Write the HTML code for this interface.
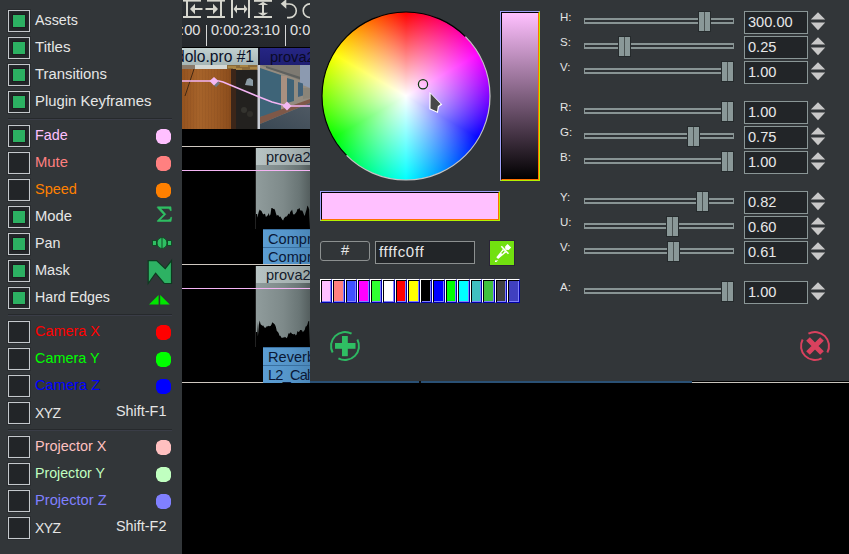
<!DOCTYPE html><html><head><meta charset="utf-8"><style>
*{margin:0;padding:0;box-sizing:border-box}
html,body{width:849px;height:554px;overflow:hidden;background:#000}
body{position:relative;font-family:"Liberation Sans",sans-serif}
.a{position:absolute}
.t{position:absolute;white-space:nowrap;font-size:14.8px;line-height:16px;color:#e6e6e6}
.cb{position:absolute;width:22px;height:22px;border:1px solid #c4c8cc;background:#222528;box-shadow:0 0 0 1px #2a2d30, inset 0 0 0 1px #26292c}
.cb i{position:absolute;left:4px;top:4px;width:12px;height:12px;background:#2cb062;box-shadow:0 0 0 1px #1e1c20}
.sep{position:absolute;left:8px;width:164px;height:2px;border-top:1px solid #26292c;background:#3a3d47}
.oct{position:absolute;width:15px;height:15px;clip-path:polygon(33% 0,67% 0,87% 8%,100% 33%,100% 67%,92% 87%,67% 100%,33% 100%,13% 92%,0 67%,0 33%,8% 13%)}
</style></head><body>

<div class="a" style="left:0;top:0;width:182px;height:554px;background:#323639"></div>
<div class="cb" style="left:8px;top:10px"><i></i></div>
<div class="t" style="left:35px;top:12px;color:#e6e6e6;font-size:14.3px;">Assets</div>
<div class="cb" style="left:8px;top:37px"><i></i></div>
<div class="t" style="left:35px;top:39px;color:#e6e6e6;font-size:15.1px;">Titles</div>
<div class="cb" style="left:8px;top:64px"><i></i></div>
<div class="t" style="left:35px;top:66px;color:#e6e6e6;font-size:14.85px;">Transitions</div>
<div class="cb" style="left:8px;top:91px"><i></i></div>
<div class="t" style="left:35px;top:93px;color:#e6e6e6;font-size:14.85px;">Plugin Keyframes</div>
<div class="cb" style="left:8px;top:125px"><i></i></div>
<div class="t" style="left:35px;top:127px;color:#ffc0ff;font-size:14.35px;">Fade</div>
<div class="oct" style="left:156px;top:129px;background:#ffc0ff"></div>
<div class="cb" style="left:8px;top:152px"></div>
<div class="t" style="left:35px;top:154px;color:#ff8080;font-size:14.8px;">Mute</div>
<div class="oct" style="left:156px;top:156px;background:#ff8080"></div>
<div class="cb" style="left:8px;top:179px"></div>
<div class="t" style="left:35px;top:181px;color:#ff8000;font-size:14.5px;">Speed</div>
<div class="oct" style="left:156px;top:183px;background:#ff8000"></div>
<div class="cb" style="left:8px;top:206px"><i></i></div>
<div class="t" style="left:35px;top:208px;color:#e6e6e6;font-size:14.8px;">Mode</div>
<svg class="a" style="left:150px;top:200px" width="30" height="30" viewBox="0 0 30 30"><path d="M7 0.5 H21.5 L21.8 4.5 H20.8 C20.3 2.8 19.5 2.3 17 2.3 H10.5 L16 8.3 L9.8 14 H17.5 C19.8 14 20.8 13.4 21.3 11.3 H22.3 L21.6 15.6 H6.8 V14.8 L13.6 8.5 L6.8 1.4 Z" fill="#2fbf63" stroke="#2fbf63" stroke-width="0.6" transform="translate(7.3,6.3) scale(0.93,0.97) translate(-6.8,0)"/></svg>
<div class="cb" style="left:8px;top:233px"><i></i></div>
<div class="t" style="left:35px;top:235px;color:#e6e6e6;font-size:14.3px;">Pan</div>
<svg class="a" style="left:150px;top:233px" width="30" height="22" viewBox="0 0 30 22"><rect x="2.5" y="7.5" width="4" height="5" fill="#2fbf63" stroke="#124a26" stroke-width="1"/><rect x="17.5" y="7.5" width="4" height="5" fill="#2fbf63" stroke="#124a26" stroke-width="1"/><ellipse cx="12" cy="10" rx="5" ry="5.5" fill="#2fbf63" stroke="#124a26" stroke-width="1"/><rect x="11.5" y="5" width="1" height="10" fill="#124a26"/></svg>
<div class="cb" style="left:8px;top:260px"><i></i></div>
<div class="t" style="left:35px;top:262px;color:#e6e6e6;font-size:14.55px;">Mask</div>
<svg class="a" style="left:146px;top:258px" width="30" height="30" viewBox="0 0 30 30"><path d="M2.2 2.6 H10.6 L19.2 10.6 L25.5 2.6 V25.5 H18.2 L9.6 15.2 L2.2 25.5 Z" fill="#2db263" stroke="#0e3a20" stroke-width="1.2" stroke-linejoin="miter"/></svg>
<div class="cb" style="left:8px;top:287px"><i></i></div>
<div class="t" style="left:35px;top:289px;color:#e6e6e6;font-size:14.2px;">Hard Edges</div>
<svg class="a" style="left:146px;top:287px" width="30" height="22" viewBox="0 0 30 22"><path d="M3 17.5 L12.6 7.9 V17.5 Z M14.2 7.9 L23.8 17.5 H14.2 Z" fill="#00e600"/></svg>
<div class="cb" style="left:8px;top:321px"></div>
<div class="t" style="left:35px;top:323px;color:#ff0000;font-size:14.45px;">Camera X</div>
<div class="oct" style="left:156px;top:325px;background:#ff0000"></div>
<div class="cb" style="left:8px;top:348px"></div>
<div class="t" style="left:35px;top:350px;color:#00ff00;font-size:14.4px;">Camera Y</div>
<div class="oct" style="left:156px;top:352px;background:#00ff00"></div>
<div class="cb" style="left:8px;top:375px"></div>
<div class="t" style="left:35px;top:377px;color:#0000ff;font-size:14.65px;">Camera Z</div>
<div class="oct" style="left:156px;top:379px;background:#0000ff"></div>
<div class="cb" style="left:8px;top:402px"></div>
<div class="t" style="left:35px;top:405px;color:#e6e6e6;font-size:14.0px;letter-spacing:-0.6px">XYZ</div>
<div class="t" style="left:116px;top:403px;font-size:14.4px">Shift-F1</div>
<div class="cb" style="left:8px;top:436px"></div>
<div class="t" style="left:35px;top:438px;color:#ffc0c0;font-size:14.45px;">Projector X</div>
<div class="oct" style="left:156px;top:440px;background:#ffc0c0"></div>
<div class="cb" style="left:8px;top:463px"></div>
<div class="t" style="left:35px;top:465px;color:#c0ffc0;font-size:14.2px;">Projector Y</div>
<div class="oct" style="left:156px;top:467px;background:#c0ffc0"></div>
<div class="cb" style="left:8px;top:490px"></div>
<div class="t" style="left:35px;top:492px;color:#8080ff;font-size:14.65px;">Projector Z</div>
<div class="oct" style="left:156px;top:494px;background:#8080ff"></div>
<div class="cb" style="left:8px;top:517px"></div>
<div class="t" style="left:35px;top:520px;color:#e6e6e6;font-size:14.0px;letter-spacing:-0.6px">XYZ</div>
<div class="t" style="left:116px;top:518px;font-size:14.4px">Shift-F2</div>
<div class="sep" style="top:118px"></div>
<div class="sep" style="top:314px"></div>
<div class="sep" style="top:429px"></div>
<div class="a" style="left:182px;top:0;width:128px;height:554px;background:#000;overflow:hidden">
<div class="a" style="left:0;top:0;width:128px;height:47px;background:linear-gradient(#2c3034,#25282c)"></div>
<svg class="a" style="left:0;top:0" width="128" height="22" viewBox="182 0 128 22">
<g fill="#d6d6ce">
<rect x="183" y="0" width="18" height="1.6"/><rect x="186" y="0" width="2" height="17"/><rect x="183" y="16" width="18" height="2"/>
<rect x="193.5" y="8" width="9" height="2"/><path d="M190 9 L195 3.8 V14.2 Z"/>
<rect x="207" y="0" width="18" height="1.6"/><rect x="220" y="0" width="2" height="17"/><rect x="207" y="16" width="18" height="2"/>
<rect x="205.5" y="8" width="9" height="2"/><path d="M218 9 L213 3.8 V14.2 Z"/>
<rect x="231" y="0" width="2" height="18"/><rect x="248" y="0" width="2" height="18"/>
<rect x="235" y="8" width="11" height="2"/><path d="M233.5 9 L237 4.5 V13.5 Z M247.5 9 L244 4.5 V13.5 Z"/>
<rect x="254" y="0" width="18" height="1.8"/><rect x="254" y="16" width="18" height="2"/>
<rect x="262" y="3" width="2" height="12"/><path d="M263 1.8 L268.2 5 H257.8 Z M263 16 L268.2 12.8 H257.8 Z"/>
<path d="M280.7 3.8 L286.3 -1 V8.7 Z"/>
</g>
<path d="M285 4 H289.5 A6.8 6.8 0 0 1 289.5 17.6 H287" fill="none" stroke="#d6d6ce" stroke-width="1.6"/>
<circle cx="310" cy="10.7" r="6.8" fill="none" stroke="#d6d6ce" stroke-width="1.6"/>
</svg>
<div class="t" style="left:-10px;top:22px;color:#e2e2e2;font-size:14.6px">0:00</div>
<div class="a" style="left:24px;top:25px;width:1.2px;height:21px;background:#d8d8d8"></div>
<div class="t" style="left:29px;top:22px;color:#e2e2e2;font-size:14.6px">0:00:23:10</div>
<div class="a" style="left:103px;top:25px;width:1.2px;height:21px;background:#d8d8d8"></div>
<div class="t" style="left:108px;top:22px;color:#e2e2e2;font-size:14.6px">0:00:23:10</div>
<div class="a" style="left:0;top:48px;width:76px;height:17px;background:linear-gradient(#c2d0d0,#a6b6b6)"></div>
<div class="t" style="left:-6px;top:48.5px;color:#081028;font-size:15.6px">dolo.pro #1</div>
<div class="a" style="left:76px;top:48px;width:2px;height:17px;background:#1a1a2a"></div>
<div class="a" style="left:78px;top:48px;width:50px;height:17px;background:linear-gradient(#262684,#1e1e72)"></div>
<div class="t" style="left:88px;top:49px;color:#0a0a28;font-size:14.6px">prova2</div>
<svg class="a" style="left:0;top:65px" width="128" height="64" viewBox="182 65 128 64">
<defs>
<linearGradient id="wood" x1="0" x2="1" y1="0" y2="0"><stop offset="0" stop-color="#95531f"/><stop offset="0.35" stop-color="#a6632a"/><stop offset="0.7" stop-color="#9c5a24"/><stop offset="1" stop-color="#8a4c1c"/></linearGradient>
<linearGradient id="pave" x1="0" x2="1" y1="1" y2="0"><stop offset="0" stop-color="#3a4854"/><stop offset="1" stop-color="#505a64"/></linearGradient>
<pattern id="grain" width="3" height="64" patternUnits="userSpaceOnUse"><rect width="3" height="64" fill="rgba(0,0,0,0)"/><rect x="1" width="0.8" height="64" fill="rgba(60,30,10,0.08)"/></pattern>
</defs>
<rect x="182" y="65" width="78" height="64" fill="#252220"/>
<rect x="182" y="65" width="13" height="4" fill="#8a7a6a"/>
<rect x="195" y="65" width="32" height="4" fill="#d4d8d4"/>
<rect x="227" y="65" width="31" height="5" fill="#8a6a38"/>
<path d="M228 67 H236 M240 66 H248 M250 68 H257 M233 69 H242" stroke="#c8a050" stroke-width="1"/>
<rect x="182" y="69" width="49" height="60" fill="url(#wood)"/>
<rect x="182" y="69" width="49" height="60" fill="url(#grain)"/>
<path d="M194 69 L185 96" stroke="#3a2412" stroke-width="0.9"/>
<rect x="231" y="69" width="5" height="60" fill="#3c2619"/>
<rect x="236" y="70" width="22" height="59" fill="#23211f"/>
<path d="M245 85 L247 79 L250 78 L253 80 V86 Z" fill="#8a9aa4"/>
<circle cx="244" cy="110" r="3" fill="#34332f"/><circle cx="250" cy="114" r="3" fill="#302e2a"/>
<rect x="257.5" y="65" width="2.5" height="64" fill="#c8ccd4"/>
<rect x="260" y="65" width="50" height="64" fill="#948c80"/>
<path d="M260 65 H310 V84 Z" fill="#7e7a72"/><path d="M266 66 L310 80 V82.5 L266 68 Z" fill="#5e605e"/>
<path d="M300 65 H310 V88 L300 84 Z" fill="#8c9ab0"/>
<path d="M260 68 L281 75 V113 L260 117 Z" fill="#3e6478"/>
<rect x="281" y="76" width="6" height="38" fill="#a89080"/>
<path d="M287 78 L294 80 V101 L287 103 Z" fill="#3f6276"/>
<path d="M298 82 L303 83.5 V95.5 L298 97 Z" fill="#42627a"/>
<path d="M303 88 H310 V98 L303 99 Z" fill="#8a8478"/>
<path d="M260 117 L310 99 V103 L260 124 Z" fill="#7e5848"/>
<path d="M260 124 L310 103 V129 H260 Z" fill="url(#pave)"/>
</svg>
<svg class="a" style="left:0;top:65px" width="128" height="64" viewBox="182 65 128 64">
<path d="M182 81 H219 L223 82 L258 96.5 L272 102 L287 106 H310" fill="none" stroke="#f4b4f4" stroke-width="1.6"/>
<path d="M215 78 L219 82 L215 86 L211 82 Z" fill="#707880" transform="translate(1,1.2)"/>
<path d="M214 77 L218.5 81 L214 85.5 L209.5 81 Z" fill="#f4b8f4"/>
<path d="M287 101.5 L291.5 106 L287 110.5 L282.5 106 Z" fill="#f4b8f4"/>
</svg>
<div class="a" style="left:0;top:146px;width:128px;height:1px;background:#cfc8c0"></div>
<div class="a" style="left:73px;top:148px;width:1px;height:81px;background:#222"></div>
<div class="a" style="left:74px;top:148px;width:54px;height:17px;background:linear-gradient(90deg,#b8c4c4,#a8b4b4 60%,#98a4a4)"></div>
<div class="t" style="left:84px;top:149px;color:#141a2a;font-size:14.6px">prova2</div>
<div class="a" style="left:74px;top:165px;width:54px;height:64px;background:linear-gradient(90deg,#909c9c 0%,#7e8a8a 50%,#6a7676 80%,#545e5e 100%)"></div>
<div class="a" style="left:0;top:170px;width:128px;height:1.3px;background:#f4b4f4"></div>
<svg class="a" style="left:0;top:0" width="128" height="554"><path d="M75 229 L75.0 217.8 L75.9 215.2 L76.8 211.5 L77.7 209.4 L78.6 210.4 L79.5 211.1 L80.4 212.9 L81.3 214.6 L82.2 213.7 L83.1 214.1 L84.0 217.2 L84.9 215.8 L85.8 215.6 L86.7 213.0 L87.6 215.9 L88.5 214.2 L89.4 208.0 L90.3 208.1 L91.2 209.0 L92.1 208.7 L93.0 210.1 L93.9 213.3 L94.8 215.8 L95.7 215.0 L96.6 215.4 L97.5 217.0 L98.4 216.6 L99.3 218.1 L100.2 219.6 L101.1 220.4 L102.0 218.3 L102.9 217.3 L103.8 216.6 L104.7 216.6 L105.6 215.3 L106.5 213.6 L107.4 214.4 L108.3 211.8 L109.2 211.1 L110.1 209.5 L111.0 213.7 L111.9 214.8 L112.8 214.0 L113.7 213.0 L114.6 211.7 L115.5 209.1 L116.4 209.3 L117.3 207.8 L118.2 210.3 L119.1 210.8 L120.0 210.2 L120.9 211.8 L121.8 214.2 L122.7 215.9 L123.6 212.4 L124.5 209.7 L125.4 205.4 L126.3 206.9 L127.2 209.5 L128 229 Z" fill="#000"/><rect x="74" y="214" width="1.2" height="15" fill="#000"/></svg>
<div class="a" style="left:81px;top:229px;width:47px;height:18px;background:linear-gradient(90deg,#5c9ed4,#5494c8 60%,#4a86b8);border-top:1px solid #3a70a0"></div>
<div class="t" style="left:86px;top:231px;color:#0a1836;font-size:14.6px;">Compressor</div>
<div class="a" style="left:81px;top:247px;width:47px;height:18px;background:linear-gradient(90deg,#5c9ed4,#5494c8 60%,#4a86b8);border-top:1px solid #3a70a0"></div>
<div class="t" style="left:86px;top:249px;color:#0a1836;font-size:14.6px;">Compressor</div>
<div class="a" style="left:0;top:264px;width:81px;height:1px;background:#cfc8c0"></div>
<div class="a" style="left:0;top:264px;width:128px;height:1px;background:#cfc8c0"></div>
<div class="a" style="left:73px;top:266px;width:1px;height:81px;background:#222"></div>
<div class="a" style="left:74px;top:266px;width:54px;height:17px;background:linear-gradient(90deg,#b8c4c4,#a8b4b4 60%,#98a4a4)"></div>
<div class="t" style="left:84px;top:267px;color:#141a2a;font-size:14.6px">prova2</div>
<div class="a" style="left:74px;top:283px;width:54px;height:64px;background:linear-gradient(90deg,#909c9c 0%,#7e8a8a 50%,#6a7676 80%,#545e5e 100%)"></div>
<div class="a" style="left:0;top:288px;width:128px;height:1.3px;background:#f4b4f4"></div>
<svg class="a" style="left:0;top:0" width="128" height="554"><path d="M75 347 L75.0 321.5 L75.9 336.4 L76.8 324.8 L77.7 320.6 L78.6 324.2 L79.5 325.0 L80.4 325.7 L81.3 325.5 L82.2 327.3 L83.1 327.8 L84.0 327.5 L84.9 325.9 L85.8 326.6 L86.7 325.8 L87.6 326.2 L88.5 326.1 L89.4 324.8 L90.3 322.2 L91.2 323.1 L92.1 323.8 L93.0 324.8 L93.9 327.1 L94.8 330.9 L95.7 331.7 L96.6 332.9 L97.5 335.7 L98.4 335.8 L99.3 337.5 L100.2 338.0 L101.1 337.2 L102.0 337.8 L102.9 336.8 L103.8 337.4 L104.7 338.3 L105.6 336.6 L106.5 333.3 L107.4 333.8 L108.3 332.4 L109.2 332.8 L110.1 334.0 L111.0 334.0 L111.9 334.6 L112.8 333.7 L113.7 335.5 L114.6 334.6 L115.5 331.1 L116.4 332.1 L117.3 331.4 L118.2 330.0 L119.1 330.1 L120.0 330.4 L120.9 332.3 L121.8 331.1 L122.7 330.1 L123.6 326.5 L124.5 326.2 L125.4 324.5 L126.3 321.3 L127.2 320.9 L128 347 Z" fill="#000"/><rect x="74" y="332" width="1.2" height="15" fill="#000"/></svg>
<div class="a" style="left:81px;top:347px;width:47px;height:18px;background:linear-gradient(90deg,#5c9ed4,#5494c8 60%,#4a86b8);border-top:1px solid #3a70a0"></div>
<div class="t" style="left:86px;top:349px;color:#0a1836;font-size:14.6px;">Reverb</div>
<div class="a" style="left:81px;top:365px;width:47px;height:18px;background:linear-gradient(90deg,#5c9ed4,#5494c8 60%,#4a86b8);border-top:1px solid #3a70a0"></div>
<div class="t" style="left:86px;top:367px;color:#0a1836;font-size:14.6px;letter-spacing:-0.8px">L2_Calf</div>
<div class="a" style="left:0;top:382px;width:81px;height:1px;background:#cfc8c0"></div>
</div>
<div class="a" style="left:310px;top:0;width:539px;height:381px;background:#323639"></div>
<div class="a" style="left:310px;top:381px;width:382px;height:2px;background:#2a5074"></div>
<div class="a" style="left:692px;top:382px;width:157px;height:1px;background:#c8c4bc"></div>
<div class="a" style="left:419px;top:381px;width:2px;height:2px;background:#0c0c0c"></div>
<div class="a" style="left:322px;top:12px;width:168px;height:168px;border-radius:50%;background:radial-gradient(closest-side,#fff,rgba(255,255,255,0)),conic-gradient(#f00,#f0f 60deg,#00f 120deg,#0ff 180deg,#0f0 240deg,#ff0 300deg,#f00 360deg)"></div>
<svg class="a" style="left:310px;top:0" width="200" height="200" viewBox="310 0 200 200">
<path d="M346.6 155.4 A84 84 0 0 1 465.4 36.6" fill="none" stroke="#000" stroke-width="1.2"/>
<path d="M465.4 36.6 A84 84 0 0 1 346.6 155.4" fill="none" stroke="#c4c4c4" stroke-width="1.2"/>
<circle cx="423" cy="84.3" r="4.6" fill="none" stroke="#0e3a0e" stroke-width="1.2"/>
<path d="M429.5 91.9 L442.3 104.4 L438.9 107 L437.9 113 L429.3 109.3 Z" fill="#fff" stroke-linejoin="round"/><path d="M430.7 93.8 L440.6 104.1 L437.8 106.2 L437 111.6 L430.5 108.4 Z" fill="#484848"/>
</svg>
<div class="a" style="left:500px;top:11px;width:40px;height:170px;border-style:solid;border-width:1px;border-color:#a0a0f8 #b4f000 #b4f000 #a0a0f8"><div style="width:100%;height:100%;background:linear-gradient(#ffc0ff,#000);border-style:solid;border-width:1px;border-color:#000 #ff7000 #ff7000 #000"></div></div>
<div class="a" style="left:320px;top:191px;width:180px;height:30px;border-style:solid;border-width:1px;border-color:#a0a0f8 #b4f000 #b4f000 #a0a0f8"><div style="width:100%;height:100%;background:#ffc0ff;border-style:solid;border-width:1px;border-color:#000 #ff7000 #ff7000 #000"></div></div>
<div class="a" style="left:320px;top:241px;width:50px;height:20px;border:1px solid #8c9090;border-radius:3px;background:#313538"></div>
<div class="t" style="left:341px;top:242px;color:#e8e8e8">#</div>
<div class="a" style="left:375px;top:241px;width:100px;height:23px;border:1px solid #8c9090;background:#222528"></div>
<div class="t" style="left:379px;top:244px;color:#e8e8e8;font-size:15px;letter-spacing:0.7px">ffffc0ff</div>
<div class="a" style="left:490px;top:241px;width:24px;height:24px;background:#72e010;box-shadow:0 0 0 1px #2a2438"></div>
<svg class="a" style="left:490px;top:241px" width="24" height="24" viewBox="0 0 24 24">
<path d="M15 5.8 L17.5 3 L21.2 6.4 L18.7 9 L15.5 8.8 Z" fill="#fff"/>
<path d="M11.3 5.2 L18.5 12.7" stroke="#fff" stroke-width="1.6"/>
<path d="M12.95 8 L16.25 11.2 L8.1 18.1 L6.3 16.3 Z" fill="#fff"/>
<path d="M13.6 9.6 L14.6 10.6 L12.2 13 L11.2 12 Z" fill="#72e010"/>
<path d="M5 19.4 L8.2 19.3 L6.4 21 L5 21 Z" fill="#fff"/>
</svg>
<div class="a" style="left:320px;top:279px;width:12px;height:24px;background:#ffc0ff;border-style:solid;border-width:1px;border-color:#fff #0000a8 #0000a8 #fff;box-shadow:inset 1px 1px 0 #000, inset -1px -1px 0 #8080ff"></div>
<div class="a" style="left:332px;top:279px;width:13px;height:24px;background:#ff8080;border-style:solid;border-width:1px;border-color:#fff #0000a8 #0000a8 #fff;box-shadow:inset 1px 1px 0 #000, inset -1px -1px 0 #8080ff"></div>
<div class="a" style="left:345px;top:279px;width:12px;height:24px;background:#4050ff;border-style:solid;border-width:1px;border-color:#fff #0000a8 #0000a8 #fff;box-shadow:inset 1px 1px 0 #000, inset -1px -1px 0 #8080ff"></div>
<div class="a" style="left:357px;top:279px;width:13px;height:24px;background:#ff00ff;border-style:solid;border-width:1px;border-color:#fff #0000a8 #0000a8 #fff;box-shadow:inset 1px 1px 0 #000, inset -1px -1px 0 #8080ff"></div>
<div class="a" style="left:370px;top:279px;width:12px;height:24px;background:#30ff30;border-style:solid;border-width:1px;border-color:#fff #0000a8 #0000a8 #fff;box-shadow:inset 1px 1px 0 #000, inset -1px -1px 0 #8080ff"></div>
<div class="a" style="left:382px;top:279px;width:13px;height:24px;background:#ffffff;border-style:solid;border-width:1px;border-color:#fff #0000a8 #0000a8 #fff;box-shadow:inset 1px 1px 0 #000, inset -1px -1px 0 #8080ff"></div>
<div class="a" style="left:395px;top:279px;width:12px;height:24px;background:#ff0000;border-style:solid;border-width:1px;border-color:#fff #0000a8 #0000a8 #fff;box-shadow:inset 1px 1px 0 #000, inset -1px -1px 0 #8080ff"></div>
<div class="a" style="left:407px;top:279px;width:13px;height:24px;background:#ffff00;border-style:solid;border-width:1px;border-color:#fff #0000a8 #0000a8 #fff;box-shadow:inset 1px 1px 0 #000, inset -1px -1px 0 #8080ff"></div>
<div class="a" style="left:420px;top:279px;width:12px;height:24px;background:#000000;border-style:solid;border-width:1px;border-color:#fff #0000a8 #0000a8 #fff;box-shadow:inset 1px 1px 0 #000, inset -1px -1px 0 #8080ff"></div>
<div class="a" style="left:432px;top:279px;width:13px;height:24px;background:#0000ff;border-style:solid;border-width:1px;border-color:#fff #0000a8 #0000a8 #fff;box-shadow:inset 1px 1px 0 #000, inset -1px -1px 0 #8080ff"></div>
<div class="a" style="left:445px;top:279px;width:12px;height:24px;background:#00ff00;border-style:solid;border-width:1px;border-color:#fff #0000a8 #0000a8 #fff;box-shadow:inset 1px 1px 0 #000, inset -1px -1px 0 #8080ff"></div>
<div class="a" style="left:457px;top:279px;width:13px;height:24px;background:#00ffff;border-style:solid;border-width:1px;border-color:#fff #0000a8 #0000a8 #fff;box-shadow:inset 1px 1px 0 #000, inset -1px -1px 0 #8080ff"></div>
<div class="a" style="left:470px;top:279px;width:12px;height:24px;background:#40c0c0;border-style:solid;border-width:1px;border-color:#fff #0000a8 #0000a8 #fff;box-shadow:inset 1px 1px 0 #000, inset -1px -1px 0 #8080ff"></div>
<div class="a" style="left:482px;top:279px;width:13px;height:24px;background:#40c040;border-style:solid;border-width:1px;border-color:#fff #0000a8 #0000a8 #fff;box-shadow:inset 1px 1px 0 #000, inset -1px -1px 0 #8080ff"></div>
<div class="a" style="left:495px;top:279px;width:12px;height:24px;background:#404040;border-style:solid;border-width:1px;border-color:#fff #0000a8 #0000a8 #fff;box-shadow:inset 1px 1px 0 #000, inset -1px -1px 0 #8080ff"></div>
<div class="a" style="left:507px;top:279px;width:13px;height:24px;background:#4040c0;border-style:solid;border-width:1px;border-color:#fff #0000a8 #0000a8 #fff;box-shadow:inset 1px 1px 0 #000, inset -1px -1px 0 #8080ff"></div>
<svg class="a" style="left:325px;top:326px" width="40" height="40" viewBox="325 326 40 40">
<g fill="none" stroke="#2db862" stroke-width="2"><path d="M357.36 339.43 A14 14 0 0 1 338.43 358.36 M332.64 352.57 A14 14 0 0 1 351.57 333.64"/></g>
<rect x="335" y="343" width="20.5" height="5.8" fill="#2fbf63"/>
<rect x="342" y="336" width="5.8" height="20.2" fill="#2fbf63"/>
</svg>
<svg class="a" style="left:795px;top:326px" width="40" height="40" viewBox="795 326 40 40">
<g fill="none" stroke="#d9415e" stroke-width="2"><path d="M821.57 358.36 A14 14 0 0 1 802.64 339.43 M808.43 333.64 A14 14 0 0 1 827.36 352.57"/></g>
<path d="M808 339 L822 353 M822 339 L808 353" stroke="#d9415e" stroke-width="5.2"/>
</svg>
<div class="t" style="left:560px;top:11px;font-size:11.5px;line-height:13px;color:#e4e4e4">H:</div>
<div class="a" style="left:584px;top:18px;width:150px;height:6px;border-style:solid;border-color:#889494;border-width:2px 1px;background:#2e3235"></div>
<div class="a" style="left:698.0px;top:11px;width:13px;height:21px;background:#252a2c;padding:1px"><div style="width:100%;height:100%;background:linear-gradient(90deg,#8a9898 0,#8a9898 45%,#4a5252 45%,#4a5252 55%,#8a9898 55%)"></div></div>
<div class="a" style="left:744px;top:11px;width:64px;height:23px;border:1px solid #8a9696;background:#222528"></div>
<div class="t" style="left:748px;top:14px;color:#e8e8e8;font-size:14.6px">300.00</div>
<svg class="a" style="left:808.5px;top:11px" width="18" height="22" viewBox="0 0 18 22"><path d="M9 1.2 L16.2 8.6 H1.8 Z M9 19.2 L16.2 11.6 H1.8 Z" fill="#c8c8c8"/></svg>
<div class="t" style="left:560px;top:36px;font-size:11.5px;line-height:13px;color:#e4e4e4">S:</div>
<div class="a" style="left:584px;top:43px;width:150px;height:6px;border-style:solid;border-color:#889494;border-width:2px 1px;background:#2e3235"></div>
<div class="a" style="left:617.5px;top:36px;width:13px;height:21px;background:#252a2c;padding:1px"><div style="width:100%;height:100%;background:linear-gradient(90deg,#8a9898 0,#8a9898 45%,#4a5252 45%,#4a5252 55%,#8a9898 55%)"></div></div>
<div class="a" style="left:744px;top:36px;width:64px;height:23px;border:1px solid #8a9696;background:#222528"></div>
<div class="t" style="left:748px;top:39px;color:#e8e8e8;font-size:14.6px">0.25</div>
<svg class="a" style="left:808.5px;top:36px" width="18" height="22" viewBox="0 0 18 22"><path d="M9 1.2 L16.2 8.6 H1.8 Z M9 19.2 L16.2 11.6 H1.8 Z" fill="#c8c8c8"/></svg>
<div class="t" style="left:560px;top:61px;font-size:11.5px;line-height:13px;color:#e4e4e4">V:</div>
<div class="a" style="left:584px;top:68px;width:150px;height:6px;border-style:solid;border-color:#889494;border-width:2px 1px;background:#2e3235"></div>
<div class="a" style="left:721.0px;top:61px;width:13px;height:21px;background:#252a2c;padding:1px"><div style="width:100%;height:100%;background:linear-gradient(90deg,#8a9898 0,#8a9898 45%,#4a5252 45%,#4a5252 55%,#8a9898 55%)"></div></div>
<div class="a" style="left:744px;top:61px;width:64px;height:23px;border:1px solid #8a9696;background:#222528"></div>
<div class="t" style="left:748px;top:64px;color:#e8e8e8;font-size:14.6px">1.00</div>
<svg class="a" style="left:808.5px;top:61px" width="18" height="22" viewBox="0 0 18 22"><path d="M9 1.2 L16.2 8.6 H1.8 Z M9 19.2 L16.2 11.6 H1.8 Z" fill="#c8c8c8"/></svg>
<div class="t" style="left:560px;top:101px;font-size:11.5px;line-height:13px;color:#e4e4e4">R:</div>
<div class="a" style="left:584px;top:108px;width:150px;height:6px;border-style:solid;border-color:#889494;border-width:2px 1px;background:#2e3235"></div>
<div class="a" style="left:721.0px;top:101px;width:13px;height:21px;background:#252a2c;padding:1px"><div style="width:100%;height:100%;background:linear-gradient(90deg,#8a9898 0,#8a9898 45%,#4a5252 45%,#4a5252 55%,#8a9898 55%)"></div></div>
<div class="a" style="left:744px;top:101px;width:64px;height:23px;border:1px solid #8a9696;background:#222528"></div>
<div class="t" style="left:748px;top:104px;color:#e8e8e8;font-size:14.6px">1.00</div>
<svg class="a" style="left:808.5px;top:101px" width="18" height="22" viewBox="0 0 18 22"><path d="M9 1.2 L16.2 8.6 H1.8 Z M9 19.2 L16.2 11.6 H1.8 Z" fill="#c8c8c8"/></svg>
<div class="t" style="left:560px;top:126px;font-size:11.5px;line-height:13px;color:#e4e4e4">G:</div>
<div class="a" style="left:584px;top:133px;width:150px;height:6px;border-style:solid;border-color:#889494;border-width:2px 1px;background:#2e3235"></div>
<div class="a" style="left:686.5px;top:126px;width:13px;height:21px;background:#252a2c;padding:1px"><div style="width:100%;height:100%;background:linear-gradient(90deg,#8a9898 0,#8a9898 45%,#4a5252 45%,#4a5252 55%,#8a9898 55%)"></div></div>
<div class="a" style="left:744px;top:126px;width:64px;height:23px;border:1px solid #8a9696;background:#222528"></div>
<div class="t" style="left:748px;top:129px;color:#e8e8e8;font-size:14.6px">0.75</div>
<svg class="a" style="left:808.5px;top:126px" width="18" height="22" viewBox="0 0 18 22"><path d="M9 1.2 L16.2 8.6 H1.8 Z M9 19.2 L16.2 11.6 H1.8 Z" fill="#c8c8c8"/></svg>
<div class="t" style="left:560px;top:151px;font-size:11.5px;line-height:13px;color:#e4e4e4">B:</div>
<div class="a" style="left:584px;top:158px;width:150px;height:6px;border-style:solid;border-color:#889494;border-width:2px 1px;background:#2e3235"></div>
<div class="a" style="left:721.0px;top:151px;width:13px;height:21px;background:#252a2c;padding:1px"><div style="width:100%;height:100%;background:linear-gradient(90deg,#8a9898 0,#8a9898 45%,#4a5252 45%,#4a5252 55%,#8a9898 55%)"></div></div>
<div class="a" style="left:744px;top:151px;width:64px;height:23px;border:1px solid #8a9696;background:#222528"></div>
<div class="t" style="left:748px;top:154px;color:#e8e8e8;font-size:14.6px">1.00</div>
<svg class="a" style="left:808.5px;top:151px" width="18" height="22" viewBox="0 0 18 22"><path d="M9 1.2 L16.2 8.6 H1.8 Z M9 19.2 L16.2 11.6 H1.8 Z" fill="#c8c8c8"/></svg>
<div class="t" style="left:560px;top:191px;font-size:11.5px;line-height:13px;color:#e4e4e4">Y:</div>
<div class="a" style="left:584px;top:198px;width:150px;height:6px;border-style:solid;border-color:#889494;border-width:2px 1px;background:#2e3235"></div>
<div class="a" style="left:696.2px;top:191px;width:13px;height:21px;background:#252a2c;padding:1px"><div style="width:100%;height:100%;background:linear-gradient(90deg,#8a9898 0,#8a9898 45%,#4a5252 45%,#4a5252 55%,#8a9898 55%)"></div></div>
<div class="a" style="left:744px;top:191px;width:64px;height:23px;border:1px solid #8a9696;background:#222528"></div>
<div class="t" style="left:748px;top:194px;color:#e8e8e8;font-size:14.6px">0.82</div>
<svg class="a" style="left:808.5px;top:191px" width="18" height="22" viewBox="0 0 18 22"><path d="M9 1.2 L16.2 8.6 H1.8 Z M9 19.2 L16.2 11.6 H1.8 Z" fill="#c8c8c8"/></svg>
<div class="t" style="left:560px;top:216px;font-size:11.5px;line-height:13px;color:#e4e4e4">U:</div>
<div class="a" style="left:584px;top:223px;width:150px;height:6px;border-style:solid;border-color:#889494;border-width:2px 1px;background:#2e3235"></div>
<div class="a" style="left:665.8px;top:216px;width:13px;height:21px;background:#252a2c;padding:1px"><div style="width:100%;height:100%;background:linear-gradient(90deg,#8a9898 0,#8a9898 45%,#4a5252 45%,#4a5252 55%,#8a9898 55%)"></div></div>
<div class="a" style="left:744px;top:216px;width:64px;height:23px;border:1px solid #8a9696;background:#222528"></div>
<div class="t" style="left:748px;top:219px;color:#e8e8e8;font-size:14.6px">0.60</div>
<svg class="a" style="left:808.5px;top:216px" width="18" height="22" viewBox="0 0 18 22"><path d="M9 1.2 L16.2 8.6 H1.8 Z M9 19.2 L16.2 11.6 H1.8 Z" fill="#c8c8c8"/></svg>
<div class="t" style="left:560px;top:241px;font-size:11.5px;line-height:13px;color:#e4e4e4">V:</div>
<div class="a" style="left:584px;top:248px;width:150px;height:6px;border-style:solid;border-color:#889494;border-width:2px 1px;background:#2e3235"></div>
<div class="a" style="left:667.2px;top:241px;width:13px;height:21px;background:#252a2c;padding:1px"><div style="width:100%;height:100%;background:linear-gradient(90deg,#8a9898 0,#8a9898 45%,#4a5252 45%,#4a5252 55%,#8a9898 55%)"></div></div>
<div class="a" style="left:744px;top:241px;width:64px;height:23px;border:1px solid #8a9696;background:#222528"></div>
<div class="t" style="left:748px;top:244px;color:#e8e8e8;font-size:14.6px">0.61</div>
<svg class="a" style="left:808.5px;top:241px" width="18" height="22" viewBox="0 0 18 22"><path d="M9 1.2 L16.2 8.6 H1.8 Z M9 19.2 L16.2 11.6 H1.8 Z" fill="#c8c8c8"/></svg>
<div class="t" style="left:560px;top:281px;font-size:11.5px;line-height:13px;color:#e4e4e4">A:</div>
<div class="a" style="left:584px;top:288px;width:150px;height:6px;border-style:solid;border-color:#889494;border-width:2px 1px;background:#2e3235"></div>
<div class="a" style="left:721.0px;top:281px;width:13px;height:21px;background:#252a2c;padding:1px"><div style="width:100%;height:100%;background:linear-gradient(90deg,#8a9898 0,#8a9898 45%,#4a5252 45%,#4a5252 55%,#8a9898 55%)"></div></div>
<div class="a" style="left:744px;top:281px;width:64px;height:23px;border:1px solid #8a9696;background:#222528"></div>
<div class="t" style="left:748px;top:284px;color:#e8e8e8;font-size:14.6px">1.00</div>
<svg class="a" style="left:808.5px;top:281px" width="18" height="22" viewBox="0 0 18 22"><path d="M9 1.2 L16.2 8.6 H1.8 Z M9 19.2 L16.2 11.6 H1.8 Z" fill="#c8c8c8"/></svg>
</body></html>
